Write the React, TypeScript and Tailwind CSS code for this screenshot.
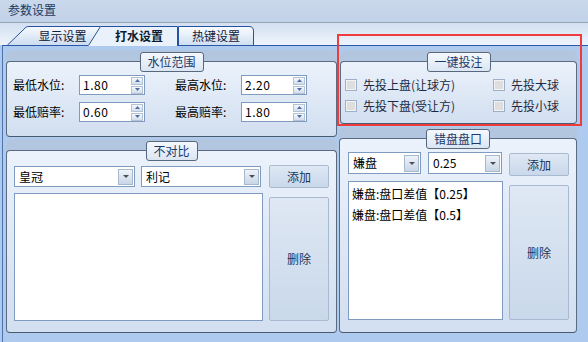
import React from "react";

const FONT = { fontFamily: '"Noto Sans CJK SC", "Noto Sans", sans-serif' };

function Group({ title, className, children }: { title: string; className: string; children?: React.ReactNode }) {
  return (
    <div className={`relative flex flex-col rounded-t-[6px] bg-[linear-gradient(#b2c6df_0,#b2c6df_14px,transparent_14px)] pt-[11px] ${className}`}>
      <div className="flex-1 rounded-[4px] border border-[#5a6a80] border-b-[#4c5a6d] bg-gradient-to-b from-[#ebf2fb] to-[#d2dff0]">
        {children}
      </div>
      <div className="absolute left-1/2 top-[2px] flex h-[20px] -translate-x-1/2 items-center rounded-[3px] border border-[#58687e] bg-gradient-to-b from-[#f4f8fd] to-[#dbe6f3] px-[7px] text-[12px] leading-none text-[#1b3a6a]">
        {title}
      </div>
    </div>
  );
}

function SpinBox({ value }: { value: string }) {
  return (
    <div className="flex h-[20px] w-[66px] items-center justify-between border border-[#7f9cc0] bg-white pl-[3px] pr-[1px]">
      <span className="text-[12px] leading-none tracking-[0.5px] text-black">{value}</span>
      <div className="flex flex-col gap-[1px]">
        <span className="flex h-[8px] w-[12px] items-center justify-center border border-[#b3c2d5] bg-gradient-to-b from-[#f5f8fc] to-[#d3deeb]">
          <svg width="5" height="3" viewBox="0 0 5 3">
            <path d="M2.5 0L5 3H0z" fill="#4d6fa9" />
          </svg>
        </span>
        <span className="flex h-[8px] w-[12px] items-center justify-center border border-[#b3c2d5] bg-gradient-to-b from-[#f5f8fc] to-[#d3deeb]">
          <svg width="5" height="3" viewBox="0 0 5 3">
            <path d="M0 0H5L2.5 3z" fill="#4d6fa9" />
          </svg>
        </span>
      </div>
    </div>
  );
}

function Select({ value, className }: { value: string; className: string }) {
  return (
    <div className={`flex items-center justify-between border border-[#7f9cc0] bg-white pl-[4px] pr-[1px] ${className}`}>
      <span className="text-[12px] leading-none text-black">{value}</span>
      <span className="flex h-[calc(100%-3px)] w-[15px] items-center justify-center border border-[#a7b7cc] bg-gradient-to-b from-[#eef3f9] to-[#c9d6e7]">
        <svg width="6" height="3" viewBox="0 0 6 3">
          <path d="M0 0H6L3 3z" fill="#4a4f58" />
        </svg>
      </span>
    </div>
  );
}

function Btn({ label, className }: { label: string; className: string }) {
  return (
    <div className={`flex items-center justify-center rounded-[2px] border border-[#a9bad0] bg-gradient-to-b from-[#dfe8f4] to-[#c9d8ea] text-[12px] leading-none text-[#1d3557] ${className}`}>
      {label}
    </div>
  );
}

function Check({ label }: { label: string }) {
  return (
    <div className="flex h-[20px] items-center gap-[6px]">
      <span className="h-[12px] w-[12px] border border-[#9eb0c7] bg-[#dedede] shadow-[inset_0_0_0_1px_#f3f3f3]" />
      <span className="text-[12px] leading-none text-[#1a2a44]">{label}</span>
    </div>
  );
}

export default function App() {
  return (
    <div className="relative h-[342px] w-[588px] overflow-hidden bg-[#aecaef]" style={FONT}>
      {/* window title */}
      <div className="flex h-[23px] items-center border-b border-[#97a5b7] bg-gradient-to-b from-[#cad8ec] to-[#c1d1e7] pb-[2px] pl-[8px] text-[12px] text-[#1e3960]">
        参数设置
      </div>

      {/* tabs */}
      <div className="flex h-[22px] items-end bg-gradient-to-b from-[#d3e0f1] to-[#eef4fb] pl-[7px]">
        <div className="relative flex h-[19px] w-[93px] items-center justify-center pl-[18px] pt-[1px] text-[12px] leading-none text-[#10203a]">
          <svg className="absolute inset-0" width="93" height="19" viewBox="0 0 93 19">
            <defs>
              <linearGradient id="t1" x1="0" y1="0" x2="0" y2="1">
                <stop offset="0" stopColor="#f7fafe" />
                <stop offset="1" stopColor="#cddcf0" />
              </linearGradient>
            </defs>
            <path d="M0 19L19 1.2Q20 0.5 22 0.5H93V19Z" fill="url(#t1)" />
            <path d="M0.5 19L19 1.2Q20 0.5 22 0.5H93" fill="none" stroke="#2552a0" />
          </svg>
          <span className="relative">显示设置</span>
        </div>
        <div className="relative z-10 -mb-[1px] -ml-[12px] flex h-[20px] w-[90px] items-center justify-center pb-[1px] pl-[12px] text-[12px] font-bold leading-none text-[#0c1a30]">
          <svg className="absolute inset-0" width="90" height="20" viewBox="0 0 90 20">
            <path d="M0 20L12.5 0.5H89.5V20Z" fill="#e9f1fa" />
            <path d="M0.5 19.5L12.5 0.5H89.5V20" fill="none" stroke="#2552a0" />
          </svg>
          <span className="relative">打水设置</span>
        </div>
        <div className="relative flex h-[19px] w-[76px] items-center justify-center pt-[1px] text-[12px] leading-none text-[#10203a]">
          <svg className="absolute inset-0" width="76" height="19" viewBox="0 0 76 19">
            <defs>
              <linearGradient id="t3" x1="0" y1="0" x2="0" y2="1">
                <stop offset="0" stopColor="#fbfdff" />
                <stop offset="1" stopColor="#cfdff2" />
              </linearGradient>
            </defs>
            <path d="M0.5 19V0.5H71Q75.5 0.5 75.5 5V19" fill="url(#t3)" stroke="#2552a0" />
          </svg>
          <span className="relative">热键设置</span>
        </div>
      </div>

      {/* page */}
      <div className="ml-[2px] flex h-[297px] gap-[2px] border-l border-t border-l-[#4d73ad] border-t-[#2b58a5] bg-[#aecaef] pl-[3px] pt-[4px]">
        <div className="flex w-[331px] flex-col gap-[2px]">
          <Group title="水位范围" className="h-[87px]">
            <div className="flex flex-col gap-[7px] pl-[6px] pt-[13px]">
              <div className="flex items-center">
                <span className="w-[66px] text-[12px] leading-none text-black">最低水位:</span>
                <SpinBox value="1.80" />
                <span className="ml-[30px] w-[66px] text-[12px] leading-none text-black">最高水位:</span>
                <SpinBox value="2.20" />
              </div>
              <div className="flex items-center">
                <span className="w-[66px] text-[12px] leading-none text-black">最低赔率:</span>
                <SpinBox value="0.60" />
                <span className="ml-[30px] w-[66px] text-[12px] leading-none text-black">最高赔率:</span>
                <SpinBox value="1.80" />
              </div>
            </div>
          </Group>
          <Group title="不对比" className="h-[194px]">
            <div className="flex flex-col pl-[7px] pt-[14px]">
              <div className="flex items-start">
                <Select value="皇冠" className="mt-[1px] h-[21px] w-[121px]" />
                <Select value="利记" className="ml-[6px] mt-[1px] h-[21px] w-[120px]" />
                <Btn label="添加" className="ml-[8px] h-[23px] w-[60px]" />
              </div>
              <div className="mt-[5px] flex items-start">
                <div className="h-[128px] w-[249px] border border-[#7f9cc0] bg-white" />
                <Btn label="删除" className="ml-[6px] mt-[4px] h-[124px] w-[60px]" />
              </div>
            </div>
          </Group>
        </div>

        <div className="flex w-[238px] flex-col gap-[3px]">
          <Group title="一键投注" className="ml-[1px] h-[74px]">
            <div className="grid grid-cols-[148px_1fr] gap-y-[1px] pl-[4px] pt-[13px]">
              <Check label="先投上盘(让球方)" />
              <Check label="先投大球" />
              <Check label="先投下盘(受让方)" />
              <Check label="先投小球" />
            </div>
          </Group>
          <Group title="错盘盘口" className="h-[206px]">
            <div className="flex flex-col pl-[8px] pt-[13px]">
              <div className="flex items-start">
                <Select value="嫌盘" className="h-[22px] w-[73px]" />
                <Select value="0.25" className="ml-[7px] h-[22px] w-[74px]" />
                <Btn label="添加" className="ml-[7px] mt-[1px] h-[23px] w-[60px]" />
              </div>
              <div className="mt-[5px] flex items-start">
                <div className="flex h-[139px] w-[155px] flex-col border border-[#7f9cc0] bg-white pl-[3px] pt-[1px] text-[12px] text-black">
                  <div className="flex h-[21px] items-center">嫌盘:盘口差值【0.25】</div>
                  <div className="flex h-[21px] items-center">嫌盘:盘口差值【0.5】</div>
                </div>
                <Btn label="删除" className="ml-[6px] mt-[4px] h-[135px] w-[60px]" />
              </div>
            </div>
          </Group>
        </div>
      </div>

      {/* annotation frame */}
      <div className="absolute left-[337px] top-[34px] z-20 h-[92px] w-[245px] border-2 border-[#ef3b3b]" />
    </div>
  );
}
